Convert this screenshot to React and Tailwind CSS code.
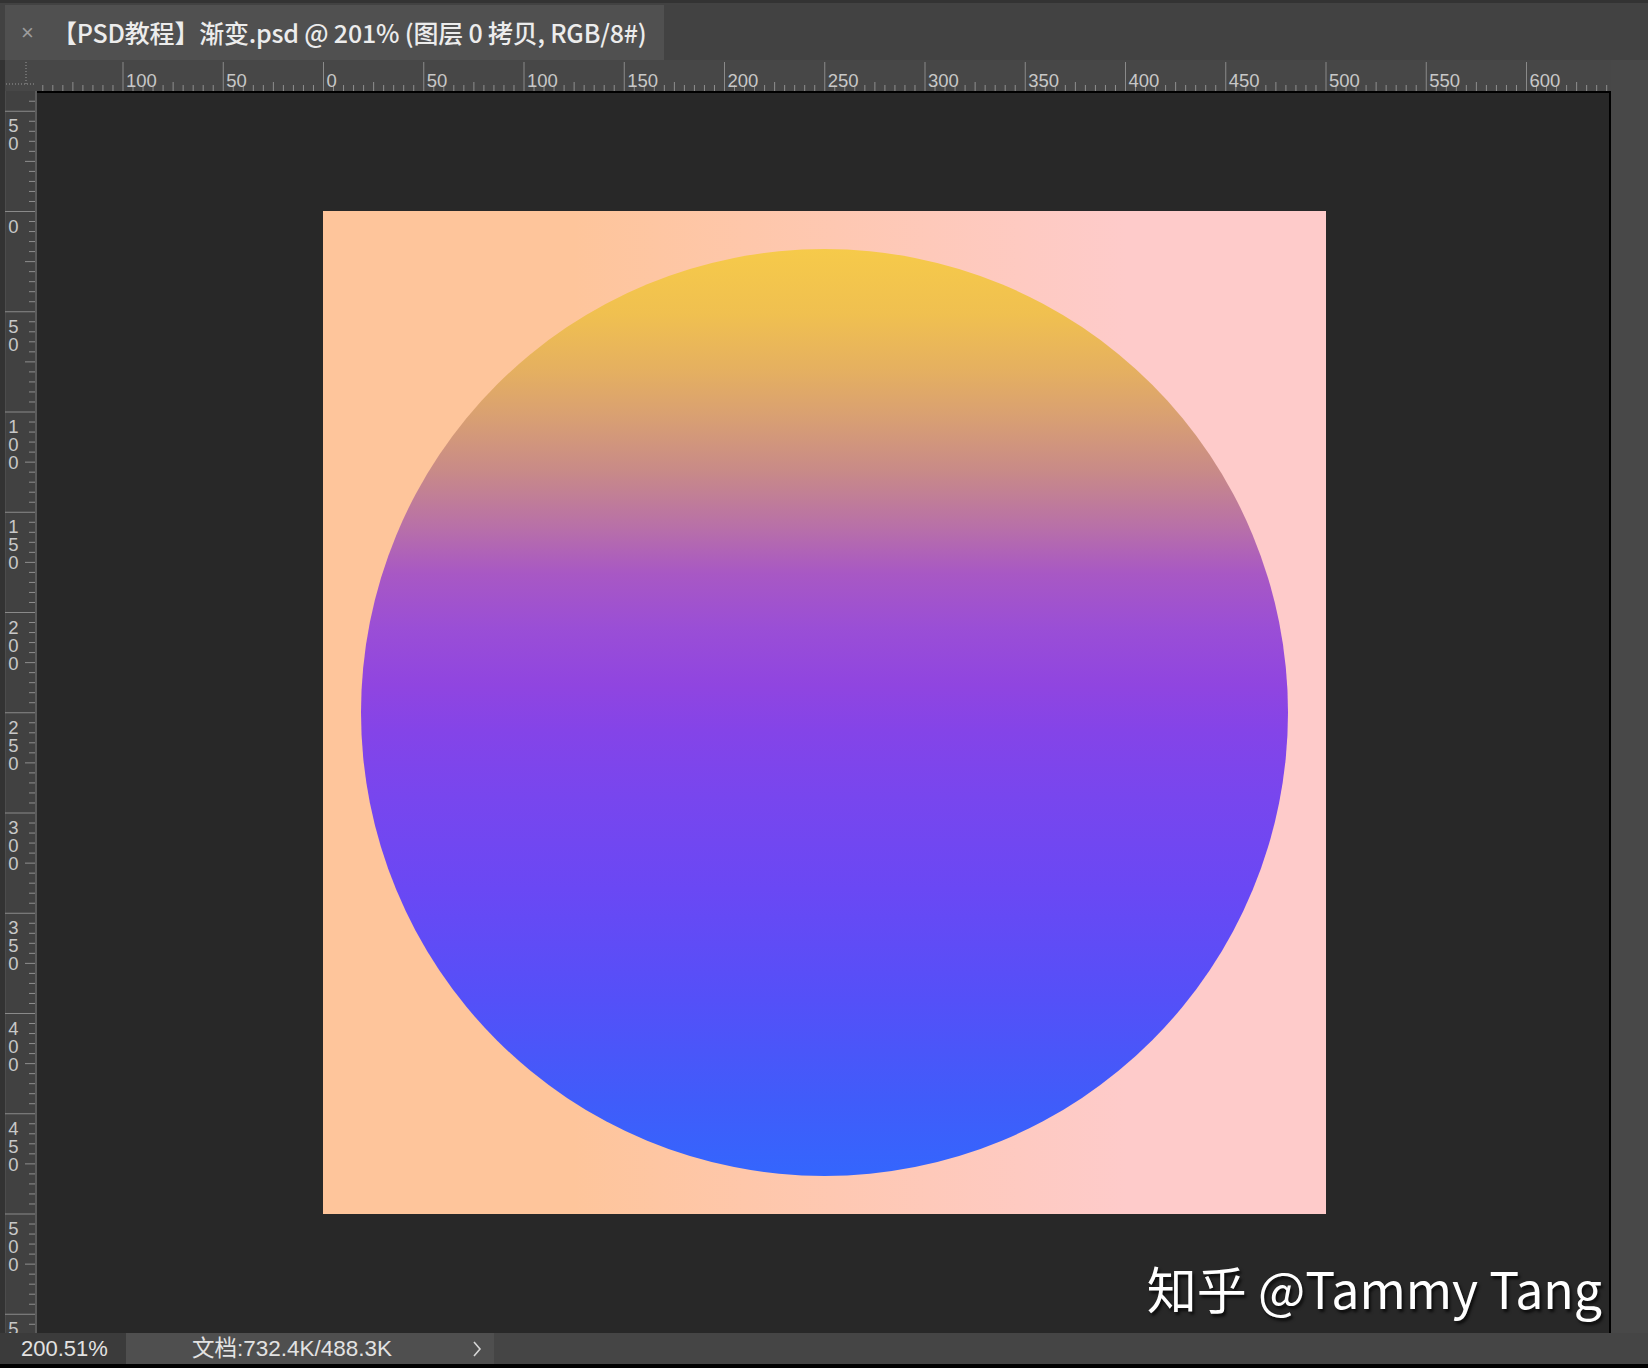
import React from "react";

const H_ZERO = 286.5;
const V_ZERO = 120.5;
const STEP = 100.25;

function HRuler() {
  const majors = [];
  for (let k = -2; k <= 12; k++) majors.push(k);
  const minors = [];
  for (let j = -28; j <= 130; j++) {
    const x = H_ZERO + j * 10.025;
    if (x < 4 || x > 1570) continue;
    if (j % 10 === 0) continue;
    minors.push({ x, tall: j % 5 === 0 });
  }
  return (
    <svg width="1574" height="31" className="block">
      {minors.map((m, i) => (
        <line
          key={i}
          x1={m.x}
          x2={m.x}
          y1={m.tall ? 22 : 25}
          y2={31}
          stroke="#8e8e8e"
          strokeWidth="1"
        />
      ))}
      {majors.map((k) => {
        const x = H_ZERO + k * STEP;
        return (
          <g key={k}>
            <line x1={x} x2={x} y1={2} y2={31} stroke="#8a8a8a" strokeWidth="1" />
            <text
              x={x + 3}
              y={27}
              fill="#c8c8c8"
              fontSize="18.5"
              fontFamily="'Liberation Sans', sans-serif"
            >
              {Math.abs(k * 50)}
            </text>
          </g>
        );
      })}
    </svg>
  );
}

function VRuler() {
  const majors = [];
  for (let k = -1; k <= 11; k++) majors.push(k);
  const minors = [];
  for (let j = -12; j <= 112; j++) {
    const y = V_ZERO + j * 10.025;
    if (y < 2 || y > 1240) continue;
    if (j % 10 === 0) continue;
    minors.push({ y, tall: j % 5 === 0 });
  }
  return (
    <svg width="37" height="1242" className="block">
      <rect x="0" y="0" width="5" height="1242" fill="#333333" />
      <rect x="5" y="0" width="1" height="1242" fill="#4c4c4c" />
      <rect x="35" y="0" width="2" height="1242" fill="#5c5c5c" />
      {minors.map((m, i) => (
        <line
          key={i}
          x1={m.tall ? 25 : 29}
          x2={35}
          y1={m.y}
          y2={m.y}
          stroke="#8e8e8e"
          strokeWidth="1"
        />
      ))}
      {majors.map((k) => {
        const y = V_ZERO + k * STEP;
        const digits = String(Math.abs(k * 50)).split("");
        return (
          <g key={k}>
            <line x1={5} x2={35} y1={y} y2={y} stroke="#8a8a8a" strokeWidth="1" />
            {digits.map((d, i) => (
              <text
                key={i}
                x={13.5}
                y={y + 21 + i * 18}
                textAnchor="middle"
                fill="#c8c8c8"
                fontSize="18.5"
                fontFamily="'Liberation Sans', sans-serif"
              >
                {d}
              </text>
            ))}
          </g>
        );
      })}
    </svg>
  );
}

function Corner() {
  return (
    <svg width="37" height="31" className="block">
      <rect x="0" y="0" width="5" height="31" fill="#333333" />
      <line x1="26" x2="26" y1="2" y2="26" stroke="#9a9a9a" strokeDasharray="1 2" />
      <line x1="6" x2="35" y1="24" y2="24" stroke="#9a9a9a" strokeDasharray="1 2" />
    </svg>
  );
}

export default function App() {
  return (
    <div
      className="w-[1648px] h-[1368px] overflow-hidden flex flex-col bg-[#424242]"
      style={{ fontFamily: "'Liberation Sans', 'Noto Sans CJK SC', sans-serif" }}
    >
      {/* tab bar */}
      <div className="h-[60px] flex items-end bg-[#424242] border-t-[3px] border-[#333333]">
        <div className="ml-[5px] w-[659px] h-[55px] bg-[#505050] flex items-center">
          <span className="ml-[16px] w-[20px] text-[22px] text-[#9c9c9c] leading-none">×</span>
          <span
            className="ml-[11px] text-[25px] font-medium text-[#ececec] whitespace-nowrap tracking-[-0.2px]"
            style={{ fontFamily: "'Noto Sans CJK SC', sans-serif" }}
          >
            【PSD教程】渐变.psd @ 201% (图层 0 拷贝, RGB/8#)
          </span>
        </div>
      </div>

      {/* ruler row */}
      <div className="h-[31px] flex bg-[#474747]">
        <Corner />
        <HRuler />
        <div className="flex-1 bg-[#484848]" />
      </div>

      {/* canvas row */}
      <div className="h-[1242px] flex">
        <div className="bg-[#414141]">
          <VRuler />
        </div>
        <div className="relative w-[1574px] bg-[#282828] border-t-2 border-r-2 border-black pl-[286px] pt-[118px]">
          <div className="w-[1003px] h-[1003px] flex items-center justify-center bg-linear-to-r from-[#fec59b] from-25% to-[#fecbca] to-80%">
            <div className="w-[927px] h-[927px] rounded-full bg-[linear-gradient(180deg,#f6ca4a_0%,#f0c050_7%,#e5b060_13%,#d9a072_18%,#c88a88_24%,#b870a8_30%,#a858c4_35%,#9a4ed6_41%,#9045e0_47%,#8444e8_52%,#7846ee_59%,#6a48f4_69%,#5450f8_81%,#405cfa_92%,#3466fd_100%)]" />
          </div>
          <div
            className="absolute right-[7px] bottom-[21px] text-[50px] leading-none text-white whitespace-nowrap [text-shadow:2px_3px_3px_rgba(0,0,0,0.7)]"
            style={{ fontFamily: "'Noto Sans CJK SC', sans-serif" }}
          >
            知乎 @Tammy Tang
          </div>
        </div>
        <div className="flex-1 bg-[#484848]" />
      </div>

      {/* status bar */}
      <div className="h-[31px] flex bg-[#454545] text-[22px] text-[#e2e2e2]">
        <div className="w-[126px] bg-[#3b3b3b] flex items-center pl-[21px]">200.51%</div>
        <div className="w-[368px] bg-[#4f4f4f] flex items-center pl-[66px]">
          <span className="text-[22.5px]">文档:732.4K/488.3K</span>
          <svg width="10" height="18" viewBox="0 0 10 18" className="ml-auto mr-[12px]">
            <path d="M2 2 L8 9 L2 16" fill="none" stroke="#d6d6d6" strokeWidth="1.6" />
          </svg>
        </div>
        <div className="flex-1" />
      </div>
      <div className="h-[4px] bg-black" />
    </div>
  );
}
